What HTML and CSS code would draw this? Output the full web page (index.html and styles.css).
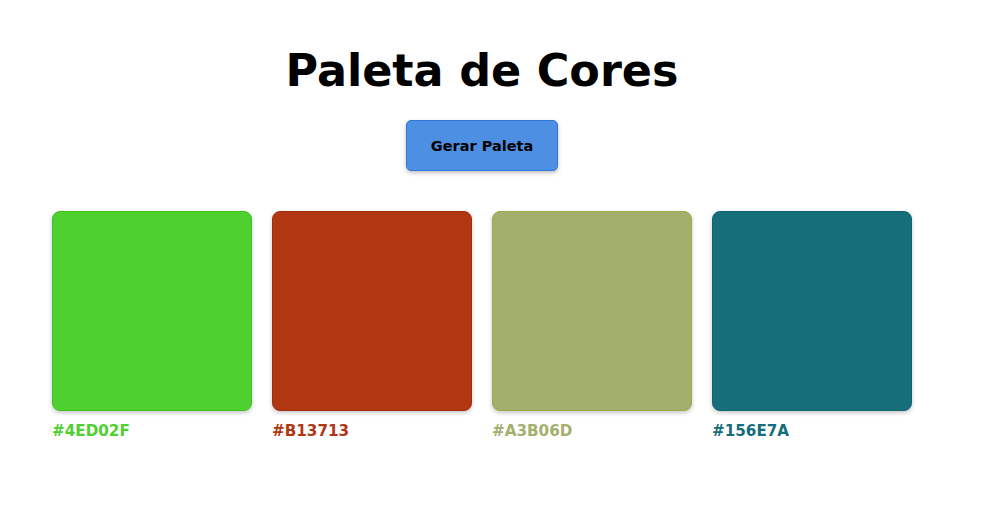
FILE: index.html
```html
<!DOCTYPE html>
<html lang="pt">
<head>
<meta charset="utf-8">
<title>Paleta de Cores</title>
<link rel="stylesheet" href="styles.css">
</head>
<body>
<main class="page">
  <h1 class="title">Paleta de Cores</h1>
  <button class="generate">Gerar Paleta</button>
  <section class="palette">
    <div class="color">
      <div class="swatch" style="background:#4ED02F;border-color:#3fc21f"></div>
      <span class="hex" style="color:#4ED02F">#4ED02F</span>
    </div>
    <div class="color">
      <div class="swatch" style="background:#B13713;border-color:#a22d0b"></div>
      <span class="hex" style="color:#B13713">#B13713</span>
    </div>
    <div class="color">
      <div class="swatch" style="background:#A3B06D;border-color:#9aab4a"></div>
      <span class="hex" style="color:#A3B06D">#A3B06D</span>
    </div>
    <div class="color">
      <div class="swatch" style="background:#156E7A;border-color:#0e6470"></div>
      <span class="hex" style="color:#156E7A">#156E7A</span>
    </div>
  </section>
</main>
</body>
</html>
```
FILE: styles.css
```css
* { box-sizing: border-box; }
html, body { margin: 0; padding: 0; background: #fff; }
body { font-family: "DejaVu Sans", "Noto Sans", sans-serif; }
.page {
  width: 964px;
  display: flex;
  flex-direction: column;
  align-items: center;
  padding-top: 41px;
}
.title {
  margin: 0;
  font-size: 44.5px;
  line-height: 60px;
  font-weight: 700;
  color: #000;
}
.generate {
  margin-top: 19px;
  width: 152px;
  height: 51px;
  background: #4c8fe3;
  border: 1px solid #2f78d6;
  border-radius: 5px;
  box-shadow: 0 2px 4px rgba(0,0,0,0.25);
  font-family: inherit;
  font-size: 14.5px;
  font-weight: 700;
  color: #000;
  cursor: pointer;
}
.palette {
  margin-top: 40px;
  display: flex;
  gap: 20px;
}
.color {
  display: flex;
  flex-direction: column;
  width: 200px;
}
.swatch {
  width: 200px;
  height: 200px;
  border: 1px solid;
  border-radius: 8px;
  box-shadow: 0 2px 4px rgba(0,0,0,0.22);
}
.hex {
  margin-top: 10px;
  font-size: 15.2px;
  line-height: 20px;
  font-weight: 700;
}
```
